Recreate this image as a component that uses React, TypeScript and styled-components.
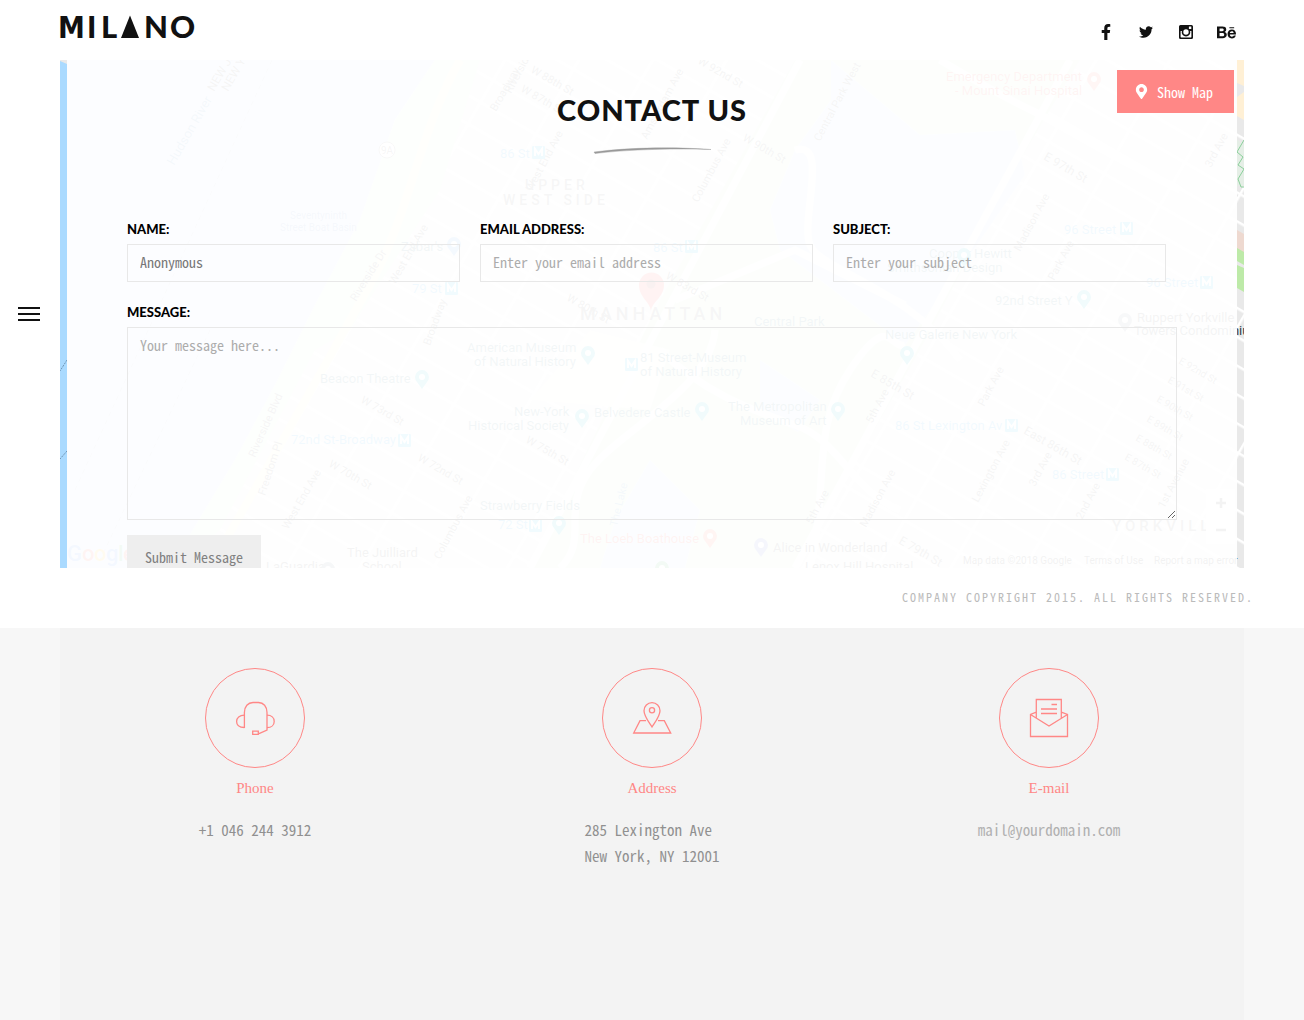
import React from 'react';
import styled, { createGlobalStyle } from 'styled-components';
import { FaBehance, FaFacebookF, FaMapMarkerAlt, FaTwitter } from 'react-icons/fa';

const mono = '"Noto Sans Mono CJK SC", "Liberation Mono", monospace';
const display = 'Lato, "Open Sans", sans-serif';
const serif = '"Liberation Serif", serif';
const coral = '#ff8786';
const ink = '#111';

const GlobalStyle = createGlobalStyle`
  *, *::before, *::after { box-sizing: border-box; }
  body { margin: 0; background: #f7f7f7; font-family: ${mono}; color: #777; }
  h1, h2, p { margin: 0; }
  a { color: inherit; text-decoration: none; }
`;

const Top = styled.div`
  display: flex;
  background: #fff;
`;

const Rail = styled.nav`
  flex: none;
  width: 60px;
  display: flex;
  align-items: center;
  padding-left: 18px;
`;

const MenuButton = styled.button`
  display: flex;
  flex-direction: column;
  gap: 4px;
  width: 22px;
  padding: 0;
  border: 0;
  background: none;
  cursor: pointer;
`;

const MenuBar = styled.span`
  height: 2px;
  background: ${ink};
`;

const Main = styled.div`
  flex: 1;
  min-width: 0;
`;

const Header = styled.header`
  display: flex;
  justify-content: space-between;
  height: 60px;
  padding: 12px 58px 0 0;
`;

const LogoSvg = styled.svg`
  display: block;
  width: 140px;
  height: 30px;
  overflow: visible;
  font-family: ${display};
  font-weight: 900;
  font-size: 31px;
  fill: ${ink};
`;

const Social = styled.div`
  display: flex;
  height: 40px;
`;

const SocialLink = styled.a<{ $size: number }>`
  width: 40px;
  display: flex;
  align-items: center;
  justify-content: center;
  color: ${ink};
  font-size: ${(p) => p.$size}px;
`;

const ContactSection = styled.section`
  position: relative;
  height: 508px;
  margin-right: 60px;
  overflow: hidden;
`;

const MapSvg = styled.svg`
  position: absolute;
  inset: 0;
  width: 100%;
  height: 100%;
  font-family: Roboto, sans-serif;
`;

const Panel = styled.div`
  position: relative;
  margin: 0 7px;
  padding: 30px 60px;
  background: rgba(255, 255, 255, 0.94);
`;

const Title = styled.h1`
  font-family: ${display};
  font-size: 29px;
  line-height: 40px;
  font-weight: 900;
  letter-spacing: 1px;
  text-align: center;
  color: ${ink};
`;

const Swash = styled.svg`
  display: block;
  width: 120px;
  height: 10px;
  margin: 16px auto 62px;
`;

const ShowMap = styled.button`
  position: absolute;
  top: 10px;
  right: 10px;
  display: flex;
  align-items: center;
  gap: 8px;
  height: 43px;
  padding: 0 21px 0 17px;
  border: 0;
  background: ${coral};
  color: #fff;
  font: 14px/20px ${mono};
  cursor: pointer;
  svg { width: 15px; height: 15px; }
`;

const FieldRow = styled.div`
  display: grid;
  grid-template-columns: repeat(3, 1fr);
  gap: 20px;
  padding-right: 11px;
  margin-bottom: 19px;
`;

const Field = styled.div`
  display: flex;
  flex-direction: column;
`;

const Label = styled.label`
  font-family: ${display};
  font-size: 13px;
  line-height: 22px;
  padding-bottom: 4px;
  font-weight: 900;
  color: #000;
`;

const Input = styled.input`
  width: 100%;
  height: 38px;
  padding: 0 12px 2px;
  border: 1px solid #e8e8e8;
  border-radius: 0;
  background: transparent;
  font: 14px/20px ${mono};
  color: #777;
  outline: none;
  &::placeholder { color: #acacac; opacity: 1; }
`;

const TextArea = styled.textarea`
  display: block;
  width: 100%;
  height: 193px;
  padding: 7px 12px;
  border: 1px solid #e8e8e8;
  background: transparent;
  font: 14px/20px ${mono};
  color: #777;
  outline: none;
  &::placeholder { color: #acacac; opacity: 1; }
`;

const Submit = styled.button`
  display: block;
  height: 45px;
  margin-top: 15px;
  padding: 0 18px 2px;
  border: 0;
  background: #eee;
  color: #808080;
  font: 14px/20px ${mono};
  cursor: pointer;
`;

const Footer = styled.footer`
  height: 60px;
  padding-right: 50px;
  text-align: right;
  font-size: 12px;
  line-height: 58px;
  letter-spacing: 2px;
  color: #bbb;
`;

const Info = styled.section`
  display: grid;
  grid-template-columns: repeat(3, 1fr);
  gap: 7px;
  min-height: calc(100vh - 628px);
  margin: 0 60px;
  padding: 40px 0;
  background: #f3f3f3;
`;

const InfoItem = styled.article`
  display: flex;
  flex-direction: column;
  align-items: center;
`;

const Circle = styled.div`
  width: 100px;
  height: 100px;
  display: flex;
  align-items: center;
  justify-content: center;
  border: 1px solid ${coral};
  border-radius: 50%;
  svg { fill: none; stroke: ${coral}; stroke-width: 1.3; }
`;

const InfoTitle = styled.h2`
  margin: 10px 0 19px;
  font: 15px/20px ${serif};
  color: ${coral};
`;

const InfoText = styled.p<{ $light?: boolean }>`
  font-size: 15px;
  line-height: 26px;
  color: ${(p) => (p.$light ? '#b0b0b0' : '#909090')};
`;

const InstagramIcon = () => (
  <svg width="14" height="14" viewBox="0 0 14 14" aria-hidden="true">
    <path
      fill="currentColor"
      fillRule="evenodd"
      d="M1.500 0h11A1.500 1.500 0 0 1 14 1.500v11a1.500 1.500 0 0 1-1.500 1.500h-11A1.500 1.500 0 0 1 0 12.500v-11A1.500 1.500 0 0 1 1.500 0zM1.600 6v5.900c0 .3.200.5.500.5h9.800c.3 0 .5-.2.500-.5V6h-1.300A4.300 4.300 0 1 1 2.900 6zM9.900 1.600v2.300h2.400V1.600zM7 4.300a2.700 2.700 0 1 0 0 5.400 2.700 2.700 0 0 0 0-5.400z"
    />
  </svg>
);

const HeadsetIcon = () => (
  <svg width="40" height="40" viewBox="0 0 40 40" aria-hidden="true">
    <path d="M9.400 30V14.500C9.400 8.500 13 4.500 18 4.500h5.500C28.500 4.500 32 8.500 32 14.500v17.500l-8 3.700" />
    <path d="M9.400 17.200C4.500 17.200 1.600 19.800 1.600 23.500s2.900 6 7.800 6M32 17.200c4.500 0 7.200 2.600 7.200 6.200s-2.700 6.200-7.200 6.200M17.700 33.200h5.600v3.200h-5.600z" />
  </svg>
);

const PlaceIcon = () => (
  <svg width="40" height="40" viewBox="0 0 40 40" aria-hidden="true">
    <path d="M20 29C16.500 23.500 12 18 12 12.700a8 8 0 0 1 16 0C28 18 23.500 23.500 20 29z" />
    <circle cx="20" cy="12.300" r="2.600" />
    <path d="M14 22.700H8L1.700 35h37L32.300 22.700H26" />
  </svg>
);

const MailIcon = () => (
  <svg width="40" height="40" viewBox="0 0 40 40" aria-hidden="true">
    <path d="M7.300 20.300V1.500h25v18.800M7.300 14.200L1.500 16.500v22h37v-22l-6.200-2.300M1.500 16.500L20 28l18.500-11.500" />
    <path d="M22.500 6.500h5.500M12 11h16M12 15.500h16" />
  </svg>
);

type MapLabel = [string, number, number, string?, number?, number?];

const transit = '#1a9fe0';
const place = '#2f6f78';
const grey = '#444';
const road = '#555';

const placeLabels: MapLabel[] = [
  ['86 St', 440, 98, transit], ['86 St', 593, 192, transit], ['79 St', 352, 233, transit],
  ['96 Street', 1004, 174, transit], ['96 Street', 1086, 227, transit],
  ['86 St Lexington Av', 835, 370, transit], ['86 Street', 992, 419, transit],
  ['72nd St-Broadway', 231, 384, transit], ['72 St', 438, 469, transit],
  ['81 Street-Museum', 580, 302, place], ['of Natural History', 580, 316, place],
  ['American Museum', 407, 292, place], ['of Natural History', 414, 306, place],
  ['Beacon Theatre', 260, 323, place], ["Zabar's", 341, 191, place],
  ['New-York', 454, 356, place], ['Historical Society', 408, 370, place],
  ['Belvedere Castle', 534, 357, place], ['The Metropolitan', 668, 351, place], ['Museum of Art', 680, 365, place],
  ['Neue Galerie New York', 825, 279, place], ['Cooper Hewitt', 869, 198, place], ['Smithsonian Design', 827, 212, place],
  ['92nd Street Y', 935, 245, place], ['Ruppert Yorkville', 1077, 262, grey], ['Towers Condominium', 1074, 275, '#34434a'],
  ['Central Park', 694, 266, place], ['Strawberry Fields', 420, 450, place],
  ['The Loeb Boathouse', 520, 483, '#e8392c'], ['Alice in Wonderland', 713, 492, grey], ['Lenox Hill Hospital', 745, 511, grey],
  ['The Juilliard', 287, 497, grey], ['School', 302, 511, grey], ['LaGuardia', 206, 511, grey],
  ['Emergency Department', 886, 21, '#e8483c'], ['- Mount Sinai Hospital', 895, 35, '#e8483c'],
  ['Seventyninth', 230, 159, '#5a80c0', 0, 10], ['Street Boat Basin', 220, 171, '#5a80c0', 0, 10],
];

const streetLabels: MapLabel[] = [
  ['Hudson River', 114, 106, '#4a86b8', -60, 13], ['NEW JERSEY', 154, 32, road, -60, 12], ['NEW YORK', 168, 32, road, -60, 12],
  ['Riverside Dr', 296, 242, road, -58], ['West End Ave', 335, 225, road, -60], ['Broadway', 436, 52, road, -60],
  ['West End Ave', 472, 132, road, -62], ['Columbus Ave', 638, 143, road, -62], ['Amsterdam Ave', 587, 80, road, -62],
  ['Central Park West', 760, 82, road, -62], ['Riverside Dr', 451, 34, road, -62], ['Riverside Blvd', 195, 398, road, -66],
  ['West End Ave', 228, 470, road, -60], ['Freedom Pl', 205, 436, road, -72], ['Columbus Ave', 380, 500, road, -62],
  ['Broadway', 370, 286, road, -70], ['W 73rd St', 300, 342, road, 30], ['W 72nd St', 357, 400, road, 30],
  ['W 70th St', 268, 406, road, 30], ['W 75th St', 465, 382, road, 30], ['W 87th St', 460, 31, road, 30],
  ['W 92nd St', 637, 3, road, 30], ['W 90th St', 682, 80, road, 30], ['E 97th St', 983, 99, road, 30, 12],
  ['W 80th St', 506, 240, road, 30], ['W 83rd St', 605, 218, road, 30], ['W 88th St', 470, 12, road, 30],
  ['E 85th St', 810, 316, road, 30, 12], ['E 79th St', 838, 483, road, 30, 12], ['East 86th St', 963, 373, road, 30, 12],
  ['Madison Ave', 960, 192, road, -62], ['Park Ave', 994, 221, road, -62], ['5th Ave', 812, 364, road, -62],
  ['Park Ave', 924, 347, road, -62], ['Madison Ave', 806, 468, road, -62], ['Lexington Ave', 918, 443, road, -62],
  ['3rd Ave', 975, 427, road, -62], ['2nd Ave', 1022, 460, road, -62], ['1st Avenue', 1104, 449, road, -62],
  ['3rd Ave', 1151, 108, road, -62], ['The Lake', 557, 467, '#4a86b8', -76], ['5th Ave', 752, 465, road, -62],
  ['E 92nd St', 1118, 303, road, 30, 10], ['E 91st St', 1107, 322, road, 30, 10], ['E 90th St', 1096, 341, road, 30, 10],
  ['E 89th St', 1086, 361, road, 30, 10], ['E 88th St', 1075, 380, road, 30, 10], ['E 87th St', 1064, 399, road, 30, 10],
];

const stations = [[472, 86], [625, 180], [385, 222], [1060, 162], [1140, 216], [945, 359], [1046, 408], [338, 374], [469, 459], [565, 298]];
const pins: [number, number, string][] = [
  [394, 184, '#4a9ae0'], [528, 293, '#12b5cb'], [362, 317, '#12b5cb'], [522, 356, '#12b5cb'], [642, 349, '#12b5cb'],
  [778, 349, '#12b5cb'], [847, 293, '#12b5cb'], [904, 195, '#12b5cb'], [1024, 237, '#12b5cb'], [1065, 260, '#7b8a96'],
  [499, 463, '#12b5cb'], [650, 476, '#f4553f'], [701, 485, '#5c6bc0'], [602, 508, '#34a853'], [1034, 19, '#f4655f'],
  [268, 509, '#607d8b'],
];

const CityMap = () => (
  <MapSvg viewBox="0 0 1184 508" preserveAspectRatio="xMidYMid slice" aria-label="Map of Manhattan">
    <defs>
      <pattern id="blocks" width="64" height="25" patternUnits="userSpaceOnUse" patternTransform="rotate(30)">
        <path d="M0 0H64M0 0V25" stroke="#fff" strokeWidth="5" />
      </pattern>
    </defs>
    <rect width="1184" height="508" fill="#e9e9e9" />
    <rect width="1184" height="508" fill="url(#blocks)" />
    <path d="M0 0H375L335 60 300 160 255 245 215 325 175 400 110 508H0z" fill="#cfdfff" />
    <path d="M0 0h7v508H0z" fill="#aadaff" />
    <path d="M0 0h7v4L0 1z" fill="#e9e9e9" />
    <path d="M375 0h45L380 130 325 215 290 270 255 290 160 470 120 508H110L175 400 215 325 255 245 300 160 335 60z" fill="#dcf2d6" />
    <path d="M400 0C360 70 350 150 315 215S200 420 150 508" fill="none" stroke="#fff0c8" strokeWidth="8" />
    <path d="M7 300L0 311M7 391L0 399" stroke="#6f94b4" strokeDasharray="2 1" />
    <path d="M212 0L15 430M150 270L40 500" fill="none" stroke="#a8b4c8" strokeDasharray="5 4" />
    <path d="M470 508L600 240 735 0H1020L960 100 860 290 735 508z" fill="#d4efcf" />
    <path d="M771 0V40L735 90 710 150 720 190 760 220 845 285 900 210 965 115 955 70 860 75z" fill="#cfdfff" />
    <path d="M590 400L640 450 625 508H540L555 460zM700 300L760 340 738 372 700 350z" fill="#cfdfff" />
    <path d="M470 340L530 270 610 290 590 350z" fill="#f3f0e4" />
    <g fill="none" stroke="#fff" strokeWidth="7">
      <path d="M880 0C930 30 950 40 975 52S1020 80 1120 130" />
      <path d="M735 90C770 80 740 160 750 185S850 230 900 300" />
      <path d="M600 290C640 330 690 350 735 365S790 430 840 450" />
      <path d="M655 270C650 330 560 370 530 410S530 480 500 508M750 508C770 420 750 370 790 310S830 290 845 285" />
      <path d="M470 508L740 0M735 508L1010 0M615 240L735 190 845 245" />
    </g>
    <path d="M1177 0h7v26l-7-3zM1177 37l7-5v28l-7-4z" fill="#fff0d5" />
    <path d="M1177 80l7 4v42h-7z" fill="#e5eee6" />
    <path d="M1184 80l-7 12 6 5-5 8 6 4-6 10 3 8h3" fill="none" stroke="#8bd09b" />
    <path d="M1177 170l7 4v23l-7 3z" fill="#eed9d0" />
    <path d="M1177 188l7 4v13l-7-4z" fill="#bdeaa8" />
    <path d="M1177 205l7 3v24l-7-4z" fill="#bdeaa8" />
    {streetLabels.map(([text, x, y, fill, turn, size]) => (
      <text key={`${text}-${x}`} fill={fill} fontSize={size ?? 11} transform={`translate(${x} ${y}) rotate(${turn})`}>{text}</text>
    ))}
    {placeLabels.map(([text, x, y, fill, , size]) => (
      <text key={`${text}-${x}`} x={x} y={y} fill={fill} fontSize={size ?? 13}>{text}</text>
    ))}
    <g fill="#666" fontWeight="500" letterSpacing="4">
      <text x="465" y="130" fontSize="14">UPPER</text>
      <text x="443" y="145" fontSize="14">WEST SIDE</text>
      <text x="520" y="260" fontSize="18">MANHATTAN</text>
      <text x="1052" y="471" fontSize="15">YORKVILLE</text>
    </g>
    {stations.map(([x, y]) => (
      <g key={`${x}-${y}`}>
        <rect x={x} y={y} width="13" height="13" rx="1" fill="#1fb6ee" />
        <path d={`M${x + 3} ${y + 10}v-7l3.500 5 3.500-5v7`} fill="none" stroke="#fff" strokeWidth="2" />
      </g>
    ))}
    {pins.map(([x, y, fill]) => (
      <g key={`${x}-${y}`} transform={`translate(${x} ${y})`}>
        <path d="M0 12L-5 5A7 7 0 1 1 5 5z" fill={fill} />
        <circle r="3" fill="#fff" />
      </g>
    ))}
    <path d="M591 252c0-10-12-14-12-27a12.500 12.500 0 0 1 25 0c0 13-13 17-13 27z" fill="#f43b36" />
    <circle cx="591" cy="224" r="4.500" fill="#9c1c19" />
    <circle cx="327" cy="90" r="8" fill="#fff" stroke="#888" />
    <text x="321" y="94" fontSize="10" fill="#666">9A</text>
    <rect x="1146" y="429" width="29" height="55" fill="#fff" />
    <path d="M1156 443h10M1161 438v10M1156 470h10" stroke="#333" strokeWidth="2.500" />
    <g fontSize="22" fontWeight="500">
      <text x="7" y="501" fill="#4285f4">G</text><text x="22" y="501" fill="#ea4335">o</text>
      <text x="34" y="501" fill="#fbbc05">o</text><text x="46" y="501" fill="#4285f4">g</text>
      <text x="58" y="501" fill="#34a853">l</text><text x="63" y="501" fill="#ea4335">e</text>
    </g>
    <g fontSize="10" fill="#222">
      <text x="903" y="504">Map data ©2018 Google</text>
      <text x="1024" y="504">Terms of Use</text>
      <text x="1094" y="504">Report a map error</text>
    </g>
  </MapSvg>
);

export default function App() {
  return (
    <>
      <GlobalStyle />
      <Top>
        <Rail>
          <MenuButton type="button" aria-label="Open menu">
            <MenuBar /><MenuBar /><MenuBar />
          </MenuButton>
        </Rail>
        <Main>
          <Header>
            <a href="#home" aria-label="Milano">
              <LogoSvg viewBox="0 0 140 30">
                <text x="-2" y="26" fontFamily="DejaVu Sans Condensed, DejaVu Sans, sans-serif" fontWeight="700" fontSize="30">M</text>
                <text x="27" y="26">I</text>
                <text x="41" y="26">L</text>
                <path d="M70 3.500L79 26H61z" />
                <text x="84" y="26">N</text>
                <text x="110" y="26">O</text>
              </LogoSvg>
            </a>
            <Social>
              <SocialLink href="#facebook" aria-label="Facebook" $size={16}><FaFacebookF /></SocialLink>
              <SocialLink href="#twitter" aria-label="Twitter" $size={14}><FaTwitter /></SocialLink>
              <SocialLink href="#instagram" aria-label="Instagram" $size={14}><InstagramIcon /></SocialLink>
              <SocialLink href="#behance" aria-label="Behance" $size={19}><FaBehance /></SocialLink>
            </Social>
          </Header>
          <ContactSection>
            <CityMap />
            <Panel>
              <Title>CONTACT US</Title>
              <Swash viewBox="0 0 120 10" aria-hidden="true">
                <path d="M2 6C40 1 85 1 119 3.500C85 2.500 40 3 3 7.500z" fill="#999" stroke="#999" strokeWidth="0.400" />
              </Swash>
              <form onSubmit={(e) => e.preventDefault()}>
                <FieldRow>
                  <Field>
                    <Label htmlFor="name">NAME:</Label>
                    <Input id="name" type="text" defaultValue="Anonymous" />
                  </Field>
                  <Field>
                    <Label htmlFor="email">EMAIL ADDRESS:</Label>
                    <Input id="email" type="email" placeholder="Enter your email address" />
                  </Field>
                  <Field>
                    <Label htmlFor="subject">SUBJECT:</Label>
                    <Input id="subject" type="text" placeholder="Enter your subject" />
                  </Field>
                </FieldRow>
                <Field>
                  <Label htmlFor="message">MESSAGE:</Label>
                  <TextArea id="message" placeholder="Your message here..." />
                </Field>
                <Submit type="submit">Submit Message</Submit>
              </form>
            </Panel>
            <ShowMap type="button"><FaMapMarkerAlt />Show Map</ShowMap>
          </ContactSection>
          <Footer>COMPANY COPYRIGHT 2015. ALL RIGHTS RESERVED.</Footer>
        </Main>
      </Top>
      <Info>
        <InfoItem>
          <Circle><HeadsetIcon /></Circle>
          <InfoTitle>Phone</InfoTitle>
          <InfoText>+1 046 244 3912</InfoText>
        </InfoItem>
        <InfoItem>
          <Circle><PlaceIcon /></Circle>
          <InfoTitle>Address</InfoTitle>
          <InfoText>285 Lexington Ave<br />New York, NY 12001</InfoText>
        </InfoItem>
        <InfoItem>
          <Circle><MailIcon /></Circle>
          <InfoTitle>E-mail</InfoTitle>
          <InfoText $light><a href="mailto:mail@yourdomain.com">mail@yourdomain.com</a></InfoText>
        </InfoItem>
      </Info>
    </>
  );
}
